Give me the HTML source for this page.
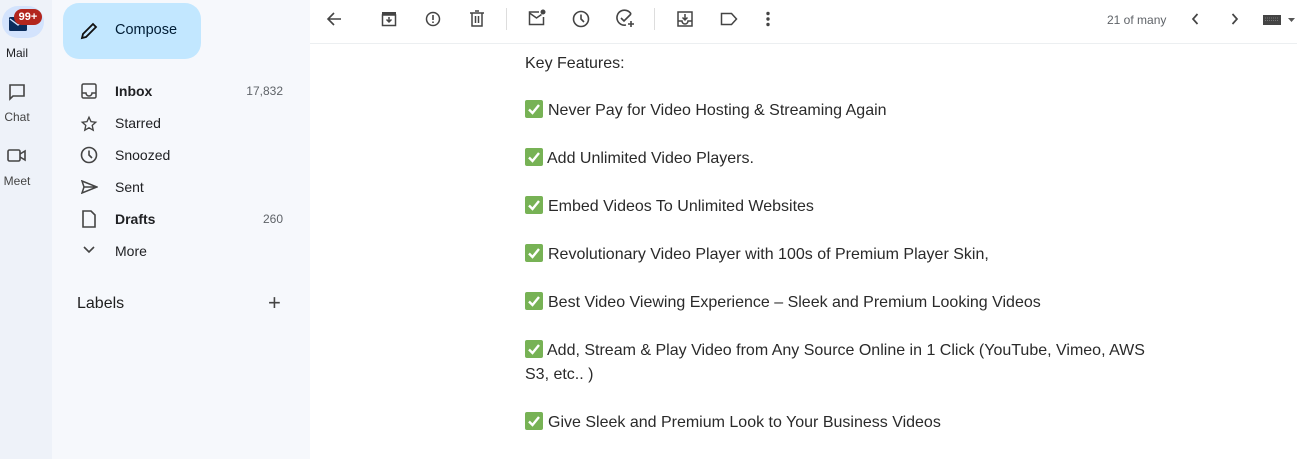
<!DOCTYPE html>
<html><head><meta charset="utf-8"><style>
*{margin:0;padding:0;box-sizing:border-box}
body{width:1297px;height:459px;overflow:hidden;background:#f6f8fc;font-family:"Liberation Sans",Arial,sans-serif;position:relative}
.rail{position:absolute;left:0;top:0;width:52px;height:459px;background:#eef2f9}
.side{position:absolute;left:52px;top:0;width:258px;height:459px;background:#f6f8fc}
.main{position:absolute;left:310px;top:0;width:987px;height:459px;background:#fff}
.a{position:absolute}
.rl{position:absolute;width:52px;text-align:center;font-size:12px;color:#444}
.nav{position:absolute;left:115px;font-size:14px;color:#202124}
.cnt{position:absolute;right:1014px;font-size:12px;color:#5f6368}
.ic{position:absolute}
.t{position:absolute;left:525px;font-size:16px;color:#2a2a2a;line-height:24px;width:640px}
.cb{display:inline-block;width:18px;height:18px;background:#77b255;border-radius:2px;vertical-align:-3px;margin-right:5px;position:relative}
</style></head><body>
<div class="rail"></div>
<div class="side"></div>
<div class="main"></div>
<div class="a" style="left:310px;top:43px;width:987px;height:1px;background:#eceff1"></div>

<div class="a" style="left:2px;top:6px;width:42px;height:32px;border-radius:16px;background:#d3e3fd"></div>
<svg class="ic" style="left:9px;top:16px" width="18" height="16" viewBox="0 0 18 16"><rect x="0" y="1" width="18" height="14" rx="1.5" fill="#0b2c5c"/><path d="M1 3l8 6 8-6" stroke="#d3e3fd" stroke-width="1.4" fill="none"/></svg>
<div class="a" style="left:14px;top:9px;width:28px;height:16px;border-radius:8px;background:#b3261e;color:#fff;font-size:11px;font-weight:bold;text-align:center;line-height:16px">99+</div>
<div class="rl" style="left:-9px;top:46px;color:#202124">Mail</div>
<svg class="ic" style="left:8px;top:83px" width="18" height="18" viewBox="0 0 18 18"><path d="M2 2h14v11H5l-3 3z" fill="none" stroke="#444" stroke-width="1.6"/></svg>
<div class="rl" style="left:-9px;top:110px">Chat</div>
<svg class="ic" style="left:7px;top:148px" width="20" height="16" viewBox="0 0 20 16"><rect x="1" y="2" width="12" height="11" rx="1.5" fill="none" stroke="#444" stroke-width="1.6"/><path d="M13 6l5-3v9l-5-3" fill="none" stroke="#444" stroke-width="1.6"/></svg>
<div class="rl" style="left:-9px;top:174px">Meet</div>

<div class="a" style="left:63px;top:3px;width:138px;height:56px;border-radius:16px;background:#c2e7ff"></div>
<svg class="ic" style="left:79px;top:21px" width="20" height="20" viewBox="0 0 20 20"><path d="M3 17l1-4L14 3l3 3L7 16z" fill="none" stroke="#111" stroke-width="1.8"/></svg>
<div class="a" style="left:115px;top:22px;font-size:14.5px;color:#001d35">Compose</div>

<svg class="ic" style="left:81px;top:83px" width="16" height="16" viewBox="0 0 16 16"><rect x="1" y="1" width="14" height="14" rx="1.5" fill="none" stroke="#444" stroke-width="1.5"/><path d="M1 10h4a3 3 0 006 0h4" fill="none" stroke="#444" stroke-width="1.5"/></svg>
<div class="nav" style="top:83px;font-weight:bold">Inbox</div><div class="cnt" style="top:84px">17,832</div>
<svg class="ic" style="left:80px;top:115px" width="18" height="18" viewBox="0 0 24 24"><path d="M12 3l2.7 5.9 6.3.7-4.7 4.3 1.3 6.3L12 17l-5.6 3.2 1.3-6.3L3 9.6l6.3-.7z" fill="none" stroke="#444" stroke-width="1.8"/></svg>
<div class="nav" style="top:115px">Starred</div>
<svg class="ic" style="left:80px;top:146px" width="18" height="18" viewBox="0 0 18 18"><circle cx="9" cy="9" r="7.5" fill="none" stroke="#444" stroke-width="1.6"/><path d="M9 4.5V9l3 3" fill="none" stroke="#444" stroke-width="1.6"/></svg>
<div class="nav" style="top:147px">Snoozed</div>
<svg class="ic" style="left:81px;top:180px" width="17" height="14" viewBox="0 0 17 14"><path d="M1 1l15 6-15 6 2-6z M3 7h13" fill="none" stroke="#444" stroke-width="1.5"/></svg>
<div class="nav" style="top:179px">Sent</div>
<svg class="ic" style="left:82px;top:210px" width="14" height="18" viewBox="0 0 14 18"><path d="M1 1h8l4 4v12H1z" fill="none" stroke="#444" stroke-width="1.6"/></svg>
<div class="nav" style="top:211px;font-weight:bold">Drafts</div><div class="cnt" style="top:212px">260</div>
<svg class="ic" style="left:83px;top:246px" width="12" height="8" viewBox="0 0 12 8"><path d="M1 1l5 5 5-5" fill="none" stroke="#444" stroke-width="1.6"/></svg>
<div class="nav" style="top:243px">More</div>
<div class="a" style="left:77px;top:295px;font-size:16px;color:#1f1f1f">Labels</div>
<div class="a" style="left:268px;top:290px;font-size:22px;color:#444;font-weight:300">+</div>

<svg class="ic" style="left:326px;top:11px" width="16" height="16" viewBox="0 0 16 16"><path d="M15 8H2M8 2L2 8l6 6" fill="none" stroke="#444" stroke-width="1.6"/></svg>
<svg class="ic" style="left:381px;top:11px" width="16" height="16" viewBox="0 0 16 16"><rect x="1.5" y="4" width="13" height="10.5" fill="none" stroke="#444" stroke-width="1.5"/><rect x="1" y="1" width="14" height="3" fill="#444"/><path d="M8 6v5M5.5 8.5L8 11l2.5-2.5" fill="none" stroke="#444" stroke-width="1.5"/></svg>
<svg class="ic" style="left:425px;top:11px" width="16" height="16" viewBox="0 0 16 16"><circle cx="8" cy="8" r="6.5" fill="none" stroke="#444" stroke-width="1.5"/><path d="M8 4v5M8 10.5v1.5" stroke="#444" stroke-width="1.6"/></svg>
<svg class="ic" style="left:469px;top:10px" width="16" height="17" viewBox="0 0 16 17"><path d="M1 3h14M6 1h4M3 3v13h10V3M6.5 6v7M9.5 6v7" fill="none" stroke="#444" stroke-width="1.5"/></svg>
<div class="a" style="left:506px;top:8px;width:1px;height:22px;background:#ddd"></div>
<svg class="ic" style="left:528px;top:9px" width="19" height="17" viewBox="0 0 19 17"><path d="M11 3H1.5v12.5h14V8" fill="none" stroke="#444" stroke-width="1.5"/><path d="M1.5 4l7 5 5-3.5" fill="none" stroke="#444" stroke-width="1.5"/><circle cx="15" cy="3" r="2.5" fill="#444"/></svg>
<svg class="ic" style="left:572px;top:10px" width="18" height="18" viewBox="0 0 18 18"><circle cx="9" cy="9" r="7.5" fill="none" stroke="#444" stroke-width="1.6"/><path d="M9 4.5V9l3 3" fill="none" stroke="#444" stroke-width="1.6"/></svg>
<svg class="ic" style="left:616px;top:9px" width="20" height="19" viewBox="0 0 20 19"><path d="M15 5A7.5 7.5 0 1 0 10 16" fill="none" stroke="#444" stroke-width="1.6"/><path d="M5 9l3 3 7-7M12 15h6M15 12v6" fill="none" stroke="#444" stroke-width="1.6"/></svg>
<div class="a" style="left:654px;top:8px;width:1px;height:22px;background:#ddd"></div>
<svg class="ic" style="left:677px;top:11px" width="16" height="16" viewBox="0 0 16 16"><rect x="1" y="1" width="14" height="14" fill="none" stroke="#444" stroke-width="1.5"/><path d="M1 10h4a3 3 0 006 0h4M8 3v6M5.5 6.5L8 9l2.5-2.5" fill="none" stroke="#444" stroke-width="1.5"/></svg>
<svg class="ic" style="left:720px;top:12px" width="18" height="14" viewBox="0 0 18 14"><path d="M1.5 1.5h10l5 5.5-5 5.5h-10z" fill="none" stroke="#444" stroke-width="1.5"/></svg>
<svg class="ic" style="left:766px;top:11px" width="4" height="16" viewBox="0 0 4 16"><circle cx="2" cy="2.5" r="1.7" fill="#444"/><circle cx="2" cy="8" r="1.7" fill="#444"/><circle cx="2" cy="13.5" r="1.7" fill="#444"/></svg>
<div class="a" style="left:1107px;top:13px;font-size:12px;color:#5f6368">21 of many</div>
<svg class="ic" style="left:1191px;top:13px" width="8" height="12" viewBox="0 0 8 12"><path d="M6.5 1L2 6l4.5 5" fill="none" stroke="#444" stroke-width="1.7"/></svg>
<svg class="ic" style="left:1231px;top:13px" width="8" height="12" viewBox="0 0 8 12"><path d="M1.5 1L6 6l-4.5 5" fill="none" stroke="#444" stroke-width="1.7"/></svg>
<svg class="ic" style="left:1263px;top:14px" width="34" height="12" viewBox="0 0 34 12"><rect x="0" y="1" width="18" height="10" fill="#444"/><path d="M2 4h14M2 6.5h14" stroke="#888" stroke-width=".7" stroke-dasharray="1 1"/><path d="M25 4h7l-3.5 4z" fill="#555"/></svg>

<div class="t" style="top:52px">Key Features:</div>
<div class="t" style="top:99px"><span class="cb"><svg width="18" height="18" viewBox="0 0 18 18"><path d="M4 9.5l3.5 3.5L14 5" fill="none" stroke="#fff" stroke-width="2.4"/></svg></span>Never Pay for Video Hosting &amp; Streaming Again</div>
<div class="t" style="top:147px"><span class="cb" style="margin-right:4px"><svg width="18" height="18" viewBox="0 0 18 18"><path d="M4 9.5l3.5 3.5L14 5" fill="none" stroke="#fff" stroke-width="2.4"/></svg></span>Add Unlimited Video Players.</div>
<div class="t" style="top:195px"><span class="cb"><svg width="18" height="18" viewBox="0 0 18 18"><path d="M4 9.5l3.5 3.5L14 5" fill="none" stroke="#fff" stroke-width="2.4"/></svg></span>Embed Videos To Unlimited Websites</div>
<div class="t" style="top:243px"><span class="cb"><svg width="18" height="18" viewBox="0 0 18 18"><path d="M4 9.5l3.5 3.5L14 5" fill="none" stroke="#fff" stroke-width="2.4"/></svg></span>Revolutionary Video Player with 100s of Premium Player Skin,</div>
<div class="t" style="top:291px"><span class="cb"><svg width="18" height="18" viewBox="0 0 18 18"><path d="M4 9.5l3.5 3.5L14 5" fill="none" stroke="#fff" stroke-width="2.4"/></svg></span>Best Video Viewing Experience – Sleek and Premium Looking Videos</div>
<div class="t" style="top:339px"><span class="cb" style="margin-right:4px"><svg width="18" height="18" viewBox="0 0 18 18"><path d="M4 9.5l3.5 3.5L14 5" fill="none" stroke="#fff" stroke-width="2.4"/></svg></span>Add, Stream &amp; Play Video from Any Source Online in 1 Click (YouTube, Vimeo, AWS S3, etc.. )</div>
<div class="t" style="top:411px"><span class="cb"><svg width="18" height="18" viewBox="0 0 18 18"><path d="M4 9.5l3.5 3.5L14 5" fill="none" stroke="#fff" stroke-width="2.4"/></svg></span>Give Sleek and Premium Look to Your Business Videos</div>
</body></html>
